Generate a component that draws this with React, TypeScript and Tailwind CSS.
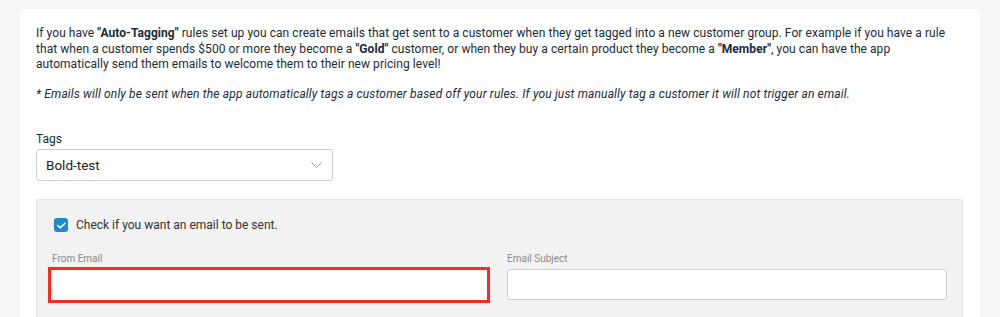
import React from "react";

export default function App() {
  return (
    <div
      className="w-[1000px] h-[317px] overflow-hidden bg-[#f4f6f6] px-5 pt-[9px]"
      style={{ fontFamily: "Roboto, 'Liberation Sans', Arial, sans-serif" }}
    >
      <div className="w-[960px] h-[400px] rounded-[4px] bg-white px-4 pt-[17px] text-[#212b36]">
        <p className="whitespace-nowrap text-[12px] leading-[15.6px] tracking-[0.06px]">
          If you have <b>"Auto-Tagging"</b> rules set up you can create emails that get sent to a customer when they get tagged into a new customer group. For example if you have a rule
          <br />
          that when a customer spends $500 or more they become a <b>"Gold"</b> customer, or when they buy a certain product they become a <b>"Member"</b>, you can have the app
          <br />
          automatically send them emails to welcome them to their new pricing level!
        </p>
        <p className="mt-[14px] whitespace-nowrap text-[12px] leading-[15.6px] italic tracking-[0.15px]">
          * Emails will only be sent when the app automatically tags a customer based off your rules. If you just manually tag a customer it will not trigger an email.
        </p>

        <div className="mt-[29px] text-[12px] leading-[16px]">Tags</div>
        <div className="mt-[2px] flex h-[32px] w-[297px] items-center justify-between rounded-[3px] border border-[#cfcfcf] bg-white pl-[9px] pr-[10px]">
          <span className="text-[13.5px] text-[#222]">Bold-test</span>
          <svg width="11" height="6" viewBox="0 0 11 6" fill="none">
            <path d="M0.5 0.5 L5.5 5.5 L10.5 0.5" stroke="#9a9a9a" strokeWidth="1" />
          </svg>
        </div>

        <div className="mt-[18px] w-[927px] h-[200px] rounded-[3px] border border-[#e4e4e4] bg-[#f2f2f2] px-[15px] pt-[18px]">
          <label className="flex items-center gap-[8px]">
            <span className="flex h-[14px] w-[14px] items-center justify-center rounded-[3px] bg-[#1d8acb] ml-[2px]">
              <svg width="9" height="7" viewBox="0 0 9 7" fill="none">
                <path d="M1 3.6 L3.4 5.8 L8 1.2" stroke="#fff" strokeWidth="1.6" strokeLinecap="round" strokeLinejoin="round" />
              </svg>
            </span>
            <span className="text-[12px] leading-[14px] text-[#333]">Check if you want an email to be sent.</span>
          </label>

          <div className="mt-[21px] flex gap-[16px]">
            <div className="w-[440px]">
              <div className="text-[10px] leading-[12px] text-[#8a8a8a]">From Email</div>
              <div className="-ml-[4px] mt-[2px] h-[36px] w-[442px] border-[3px] border-[#ff2a1f] bg-white" />
            </div>
            <div className="w-[440px]">
              <div className="text-[10px] leading-[12px] text-[#8a8a8a]">Email Subject</div>
              <div className="mt-[4px] h-[31px] w-[440px] rounded-[3px] border border-[#cccccc] bg-white" />
            </div>
          </div>
        </div>
      </div>
    </div>
  );
}
